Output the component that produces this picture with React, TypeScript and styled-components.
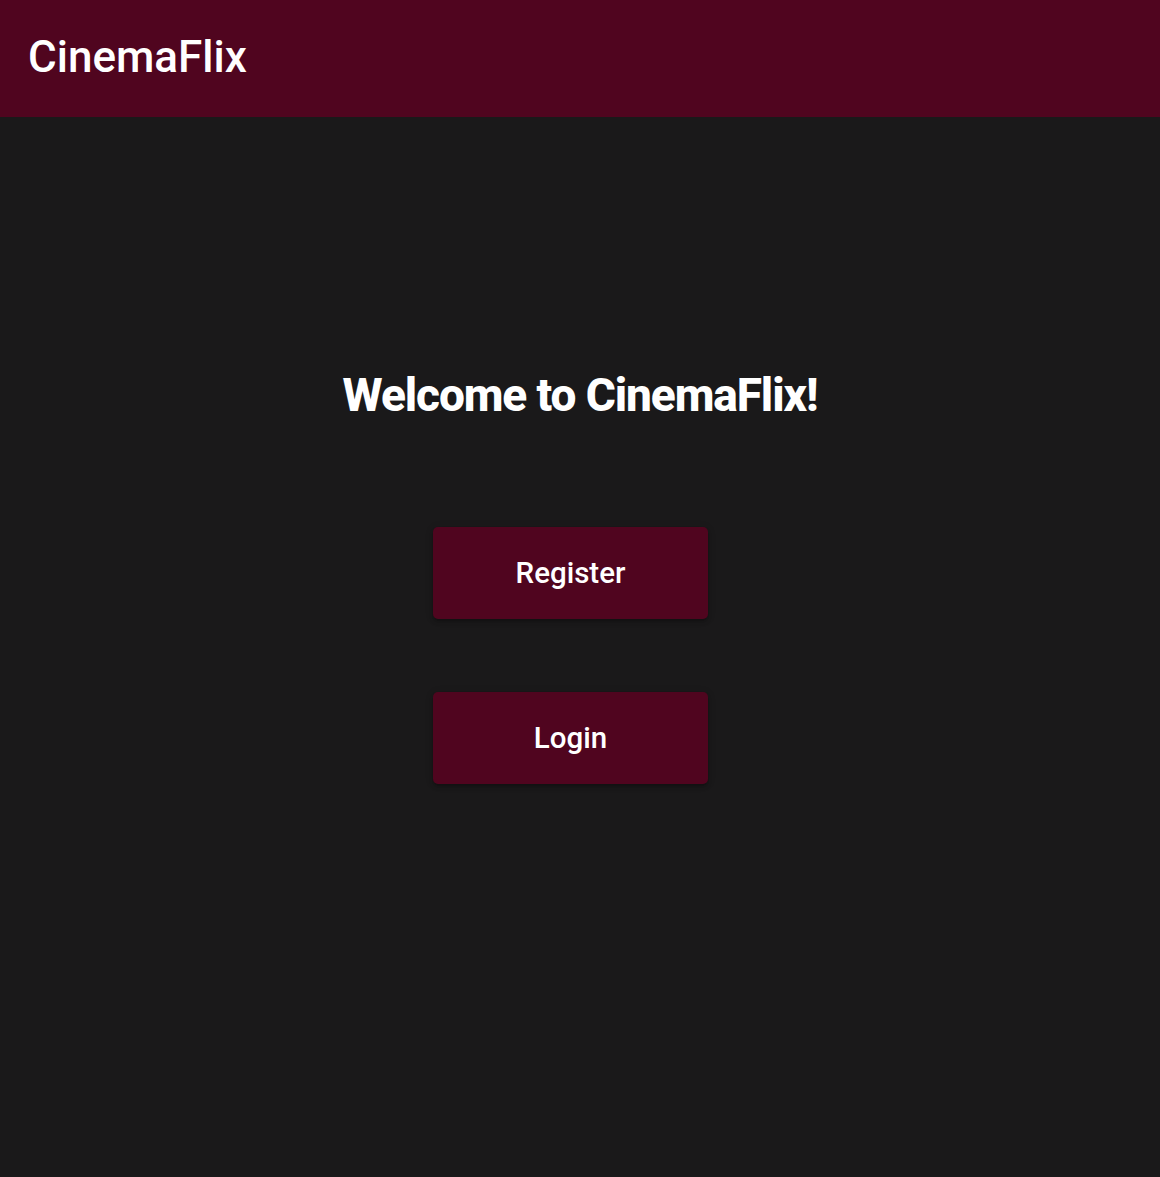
import React from "react";
import styled, { createGlobalStyle } from "styled-components";

const Global = createGlobalStyle`
  html, body { margin: 0; padding: 0; background: #1a191a; }
  body { font-family: Roboto, "Liberation Sans", sans-serif; color: #ffffff; min-height: 1177px; }
`;

const Header = styled.header`
  height: 117px;
  background: #50051f;
  display: flex;
  align-items: center;
  padding-left: 28px;
  box-sizing: border-box;
`;

const Brand = styled.div`
  font-size: 44px;
  font-weight: 500;
  letter-spacing: 0;
  color: #ffffff;
  padding-bottom: 3px;
`;

const Main = styled.main`
  display: flex;
  flex-direction: column;
  align-items: center;
  padding-top: 250px;
`;

const Title = styled.h1`
  margin: 0;
  font-size: 46px;
  font-weight: 800;
  letter-spacing: -1.1px;
  line-height: 56px;
`;

const Buttons = styled.div`
  display: flex;
  flex-direction: column;
  gap: 73px;
  margin-top: 104px;
  padding-right: 19px;
`;

const Button = styled.button`
  width: 275px;
  height: 92px;
  border: none;
  border-radius: 5px;
  background: #50051f;
  color: #ffffff;
  font-family: Roboto, "Liberation Sans", sans-serif;
  font-size: 29.5px;
  font-weight: 500;
  box-shadow: 0 3px 3px -2px rgba(0,0,0,0.2), 0 3px 4px 0 rgba(0,0,0,0.14), 0 1px 8px 0 rgba(0,0,0,0.12);
  cursor: pointer;
`;

export default function App() {
  return (
    <>
      <Global />
      <Header>
        <Brand>CinemaFlix</Brand>
      </Header>
      <Main>
        <Title>Welcome to CinemaFlix!</Title>
        <Buttons>
          <Button>Register</Button>
          <Button>Login</Button>
        </Buttons>
      </Main>
    </>
  );
}
